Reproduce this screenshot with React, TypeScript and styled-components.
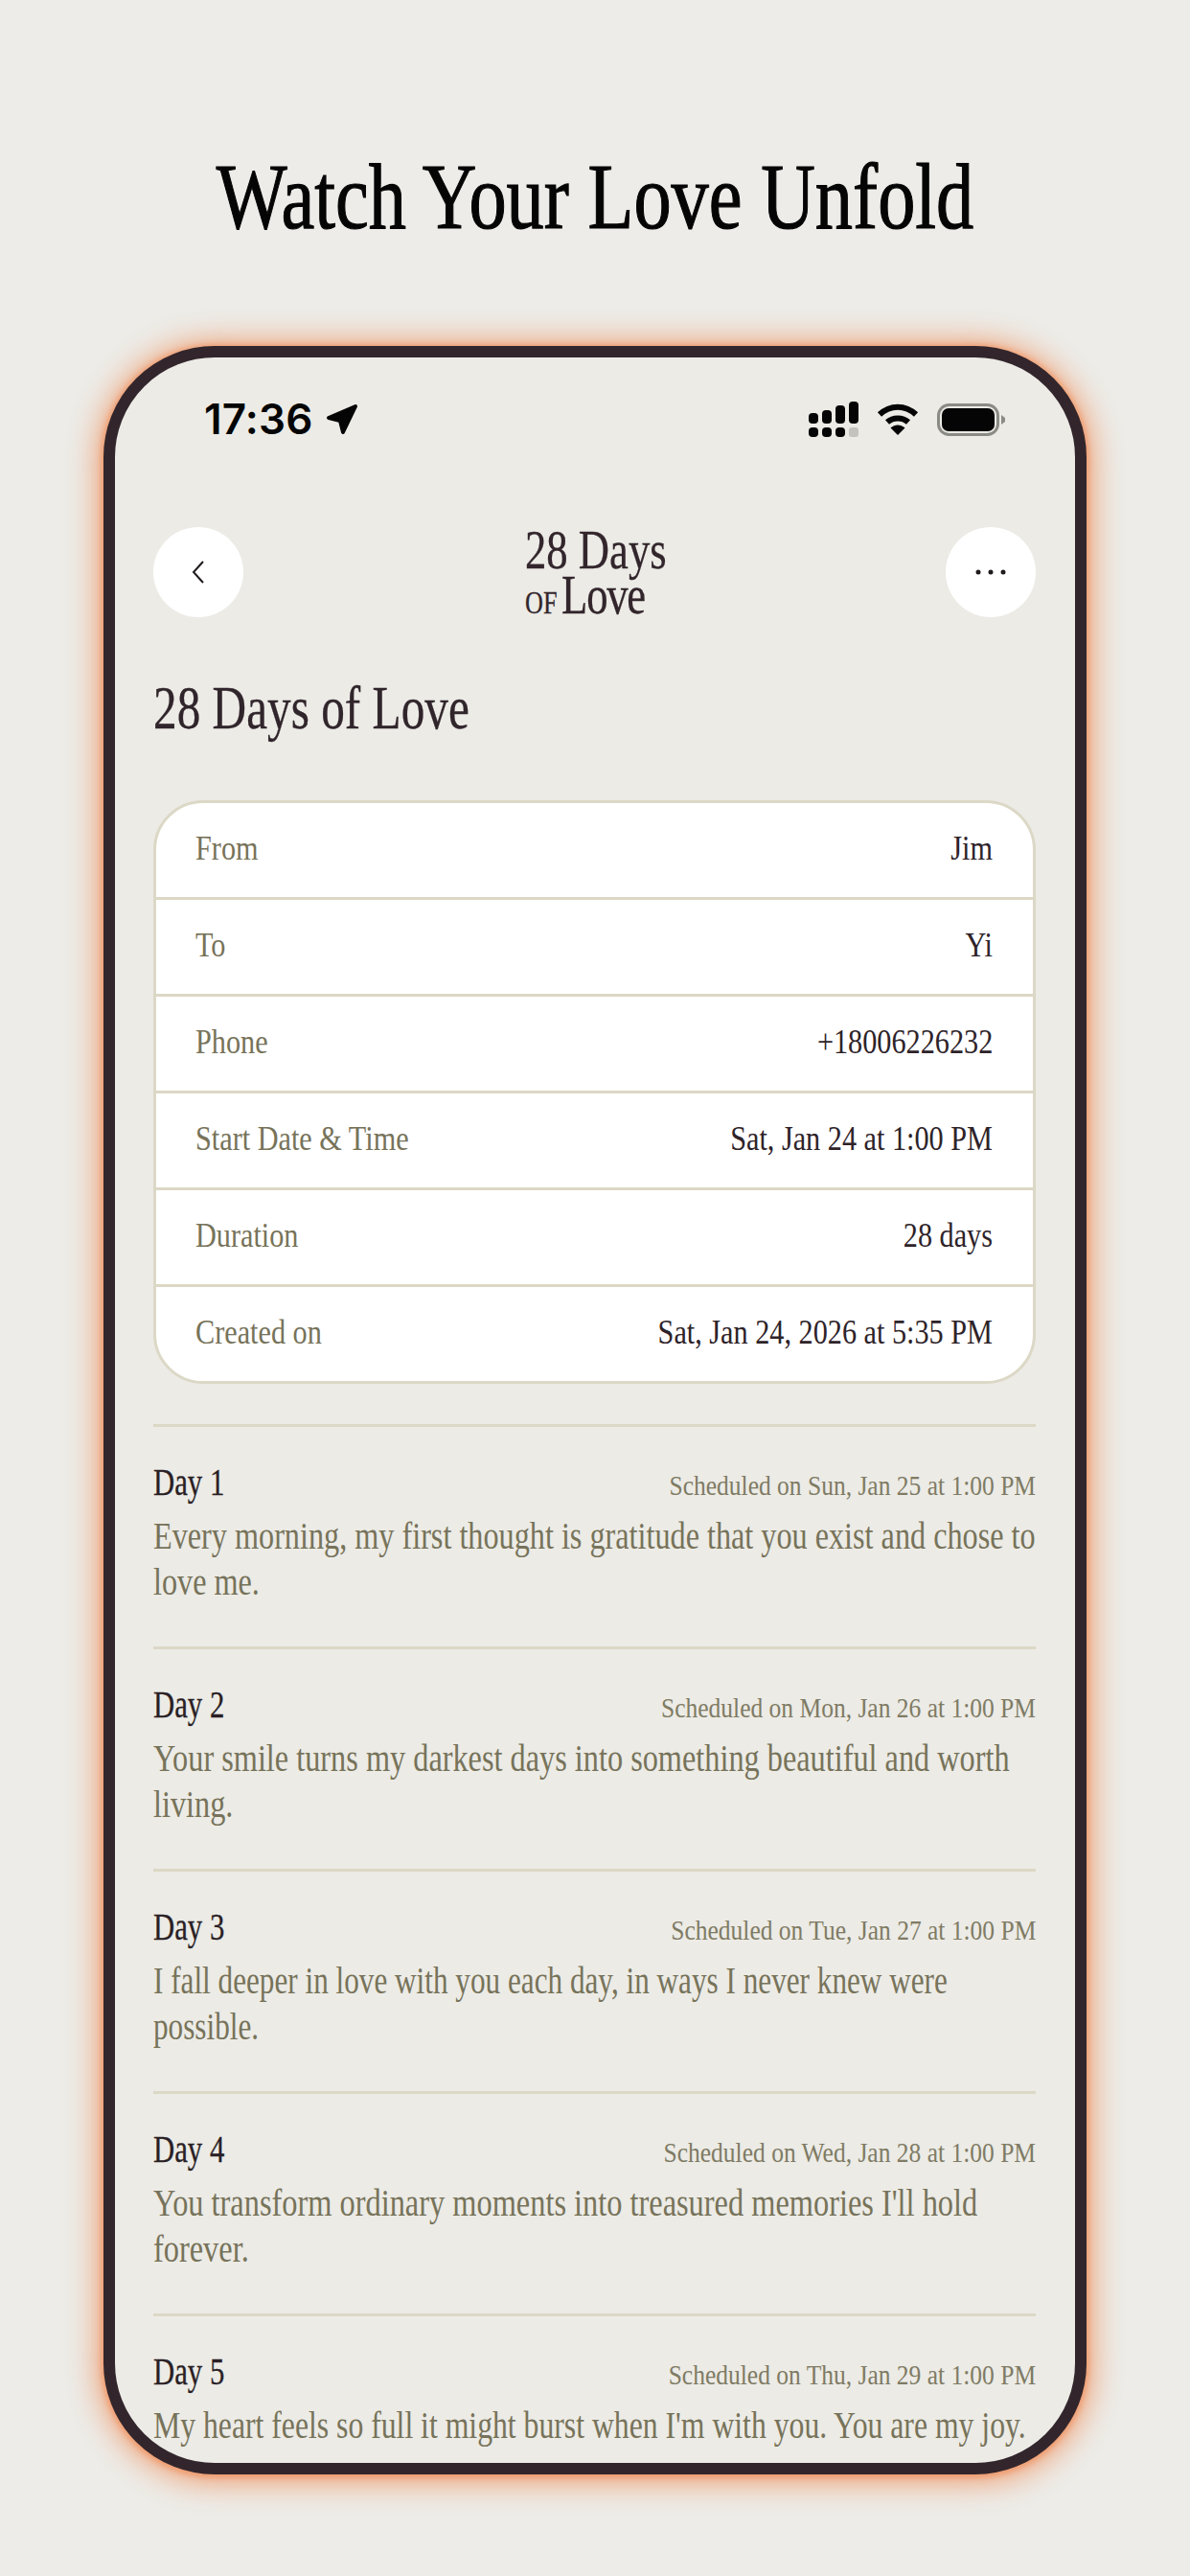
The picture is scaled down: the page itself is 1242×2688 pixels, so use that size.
import React from "react";
import styled, { createGlobalStyle } from "styled-components";

////////////////////////////////////////////////////////////////////////////////
// Data
////////////////////////////////////////////////////////////////////////////////
const details = [
  { label: "From", value: "Jim" },
  { label: "To", value: "Yi" },
  { label: "Phone", value: "+18006226232" },
  { label: "Start Date & Time", value: "Sat, Jan 24 at 1:00 PM" },
  { label: "Duration", value: "28 days" },
  { label: "Created on", value: "Sat, Jan 24, 2026 at 5:35 PM" },
];

const days = [
  {
    title: "Day 1",
    when: "Scheduled on Sun, Jan 25 at 1:00 PM",
    text: "Every morning, my first thought is gratitude that you exist and chose to love me.",
    squeeze: 0.826,
  },
  {
    title: "Day 2",
    when: "Scheduled on Mon, Jan 26 at 1:00 PM",
    text: "Your smile turns my darkest days into something beautiful and worth living.",
    squeeze: 0.828,
  },
  {
    title: "Day 3",
    when: "Scheduled on Tue, Jan 27 at 1:00 PM",
    text: "I fall deeper in love with you each day, in ways I never knew were possible.",
    squeeze: 0.8,
  },
  {
    title: "Day 4",
    when: "Scheduled on Wed, Jan 28 at 1:00 PM",
    text: "You transform ordinary moments into treasured memories I'll hold forever.",
    squeeze: 0.83,
  },
  {
    title: "Day 5",
    when: "Scheduled on Thu, Jan 29 at 1:00 PM",
    text: "My heart feels so full it might burst when I'm with you. You are my joy.",
    squeeze: 0.813,
  },
];

////////////////////////////////////////////////////////////////////////////////
// Styles
////////////////////////////////////////////////////////////////////////////////
const GlobalStyle = createGlobalStyle`
  html, body {
    margin: 0;
    padding: 0;
    background: #edece8;
  }
  body {
    height: 2688px;
    overflow: hidden;
    font-family: "Liberation Serif", "Times New Roman", serif;
  }
`;

const Page = styled.div`
  width: 1242px;
  height: 2688px;
  padding-top: 155px;
  box-sizing: border-box;
  background: #edece8;
`;

const Headline = styled.h1`
  margin: 0;
  height: 100px;
  line-height: 100px;
  font-size: 98px;
  font-weight: 400;
  color: #050505;
  text-align: center;
  white-space: nowrap;
  transform: scaleX(0.8);
  -webkit-text-stroke: 1.2px #050505;
`;

const Phone = styled.div`
  margin: 106px 0 0 108px;
  width: 1026px;
  height: 2221px;
  box-sizing: border-box;
  border: 12px solid #32262c;
  border-radius: 116px;
  background: #ecebe6;
  overflow: hidden;
  box-shadow: 0 1px 6px 2px #ef9a6c, 0 2px 30px 8px rgba(239, 154, 108, 0.85);
`;

const StatusBar = styled.div`
  display: flex;
  align-items: center;
  justify-content: space-between;
  padding: 46px 73px 0 93px;
  height: 37px;
`;

const StatusLeft = styled.div`
  display: flex;
  align-items: center;
  gap: 13px;
`;

const StatusRight = styled.div`
  display: flex;
  align-items: center;
  gap: 19px;
`;

const Clock = styled.span`
  font-family: Inter, "Liberation Sans", sans-serif;
  font-size: 44px;
  font-weight: 600;
  line-height: 37px;
  color: #050505;
  letter-spacing: 0.2px;
`;

const Content = styled.div`
  padding: 93px 41px 0 40px;
`;

const Header = styled.div`
  display: flex;
  align-items: center;
  justify-content: space-between;
  height: 96px;
`;

const RoundButton = styled.div`
  width: 94px;
  height: 94px;
  border-radius: 50%;
  background: #ffffff;
  display: flex;
  align-items: center;
  justify-content: center;
`;

const Logo = styled.div`
  width: 146px;
  height: 96px;
  padding-top: 1px;
  box-sizing: border-box;
  color: #32262c;
  font-size: 58px;
  line-height: 47px;
  white-space: nowrap;
  -webkit-text-stroke: 0.3px #32262c;
`;

const LogoLine = styled.div`
  width: 130%;
  transform: scaleX(0.77);
  transform-origin: left center;
`;

const LogoSmall = styled.span`
  font-size: 34px;
  margin-right: 6px;
`;

const LogoWord = styled.span`
  letter-spacing: -1.6px;
`;

const PageTitle = styled.h2`
  margin: 58px 0 0;
  font-size: 64px;
  line-height: 72px;
  font-weight: 400;
  color: #30252b;
  white-space: nowrap;
  transform: scaleX(0.77);
  transform-origin: left center;
  -webkit-text-stroke: 0.3px #30252b;
`;

const DetailCard = styled.div`
  margin-top: 60px;
  border: 3px solid #dcd8c6;
  border-radius: 52px;
  background: #ffffff;
  overflow: hidden;
`;

const DetailRow = styled.div`
  height: 98px;
  padding: 0 42px 4px 41px;
  box-sizing: border-box;
  display: flex;
  align-items: center;
  justify-content: space-between;
  font-size: 36px;
  white-space: nowrap;
  & + & {
    height: 101px;
    border-top: 3px solid #dcd8c6;
  }
`;

const DetailLabel = styled.span`
  display: inline-block;
  color: #77735a;
  transform: scaleX(0.84);
  transform-origin: left center;
`;

const DetailValue = styled.span`
  display: inline-block;
  color: #2e2329;
  transform: scaleX(0.84);
  transform-origin: right center;
`;

const DayList = styled.div`
  margin-top: 42px;
`;

const DayItem = styled.div`
  height: 232px;
  box-sizing: border-box;
  padding-top: 32px;
  border-top: 3px solid #dcd8c6;
`;

const DayHead = styled.div`
  display: flex;
  align-items: baseline;
  justify-content: space-between;
  height: 58px;
  line-height: 50px;
  white-space: nowrap;
`;

const DayTitle = styled.span`
  display: inline-block;
  font-size: 41px;
  color: #2a1f25;
  transform: scaleX(0.75);
  transform-origin: left center;
  -webkit-text-stroke: 0.3px #2a1f25;
`;

const DayWhen = styled.span`
  display: inline-block;
  font-size: 30px;
  color: #7f7b64;
  transform: scaleX(0.85);
  transform-origin: right center;
`;

const DayText = styled.p<{ $squeeze: number }>`
  margin: 0;
  width: 125%;
  font-size: 39px;
  line-height: 48px;
  color: #77735a;
  transform: scaleX(${(p) => p.$squeeze});
  transform-origin: left top;
`;

////////////////////////////////////////////////////////////////////////////////
// Icons
////////////////////////////////////////////////////////////////////////////////
const LocationArrow = () => (
  <svg width="34" height="33" viewBox="0 0 34 33">
    <path
      d="M3 15 L31 3 L18 30 L15 18 Z"
      fill="#050505"
      stroke="#050505"
      strokeWidth="4"
      strokeLinejoin="round"
    />
  </svg>
);

const SignalIcon = () => (
  <svg width="52" height="37" viewBox="0 0 52 37">
    <rect x="0" y="12" width="10" height="11" rx="4" fill="#050505" />
    <rect x="14" y="9" width="10" height="14" rx="4" fill="#050505" />
    <rect x="28" y="4" width="10" height="19" rx="4" fill="#050505" />
    <rect x="42" y="0" width="10" height="23" rx="4" fill="#050505" />
    <rect x="0" y="27" width="10" height="10" rx="4" fill="#050505" />
    <rect x="14" y="27" width="10" height="10" rx="4" fill="#050505" />
    <rect x="28" y="27" width="10" height="10" rx="4" fill="#050505" />
    <rect x="42" y="27" width="10" height="10" rx="3" fill="#c4c3be" />
  </svg>
);

const WifiIcon = () => (
  <svg width="44" height="33" viewBox="0 0 44 33" fill="none">
    <path d="M3 11.5 C14 1 30 1 41 11.5" stroke="#050505" strokeWidth="6" />
    <path d="M11 19.5 C17 14 27 14 33 19.5" stroke="#050505" strokeWidth="6" />
    <path d="M14.5 25.5 C19 21.5 25 21.5 29.5 25.5 L22 33 Z" fill="#050505" />
  </svg>
);

const BatteryIcon = () => (
  <svg width="71" height="34" viewBox="0 0 71 34">
    <rect x="1.5" y="1.5" width="62" height="31" rx="11" fill="none" stroke="#8b8b85" strokeWidth="3" />
    <rect x="5" y="5" width="55" height="24" rx="7" fill="#050505" />
    <path d="M67 12 L71 15 V19 L67 22 Z" fill="#8b8b85" />
  </svg>
);

const BackIcon = () => (
  <svg width="16" height="24" viewBox="0 0 16 24" fill="none">
    <path d="M13 1 L3 12 L13 23" stroke="#1f1a1c" strokeWidth="2" />
  </svg>
);

const MoreIcon = () => (
  <svg width="32" height="6" viewBox="0 0 32 6">
    <circle cx="3" cy="3" r="2.5" fill="#1f1a1c" />
    <circle cx="16" cy="3" r="2.5" fill="#1f1a1c" />
    <circle cx="29" cy="3" r="2.5" fill="#1f1a1c" />
  </svg>
);

////////////////////////////////////////////////////////////////////////////////
// Export
////////////////////////////////////////////////////////////////////////////////
const App: React.FC = () => {
  return (
    <Page>
      <GlobalStyle />
      <Headline>Watch Your Love Unfold</Headline>
      <Phone>
        <StatusBar>
          <StatusLeft>
            <Clock>17:36</Clock>
            <LocationArrow />
          </StatusLeft>
          <StatusRight>
            <SignalIcon />
            <WifiIcon />
            <BatteryIcon />
          </StatusRight>
        </StatusBar>
        <Content>
          <Header>
            <RoundButton>
              <BackIcon />
            </RoundButton>
            <Logo>
              <LogoLine>28 Days</LogoLine>
              <LogoLine>
                <LogoSmall>OF</LogoSmall>
                <LogoWord>Love</LogoWord>
              </LogoLine>
            </Logo>
            <RoundButton>
              <MoreIcon />
            </RoundButton>
          </Header>
          <PageTitle>28 Days of Love</PageTitle>
          <DetailCard>
            {details.map((d) => (
              <DetailRow key={d.label}>
                <DetailLabel>{d.label}</DetailLabel>
                <DetailValue>{d.value}</DetailValue>
              </DetailRow>
            ))}
          </DetailCard>
          <DayList>
            {days.map((d) => (
              <DayItem key={d.title}>
                <DayHead>
                  <DayTitle>{d.title}</DayTitle>
                  <DayWhen>{d.when}</DayWhen>
                </DayHead>
                <DayText $squeeze={d.squeeze}>{d.text}</DayText>
              </DayItem>
            ))}
          </DayList>
        </Content>
      </Phone>
    </Page>
  );
};

export default App;
